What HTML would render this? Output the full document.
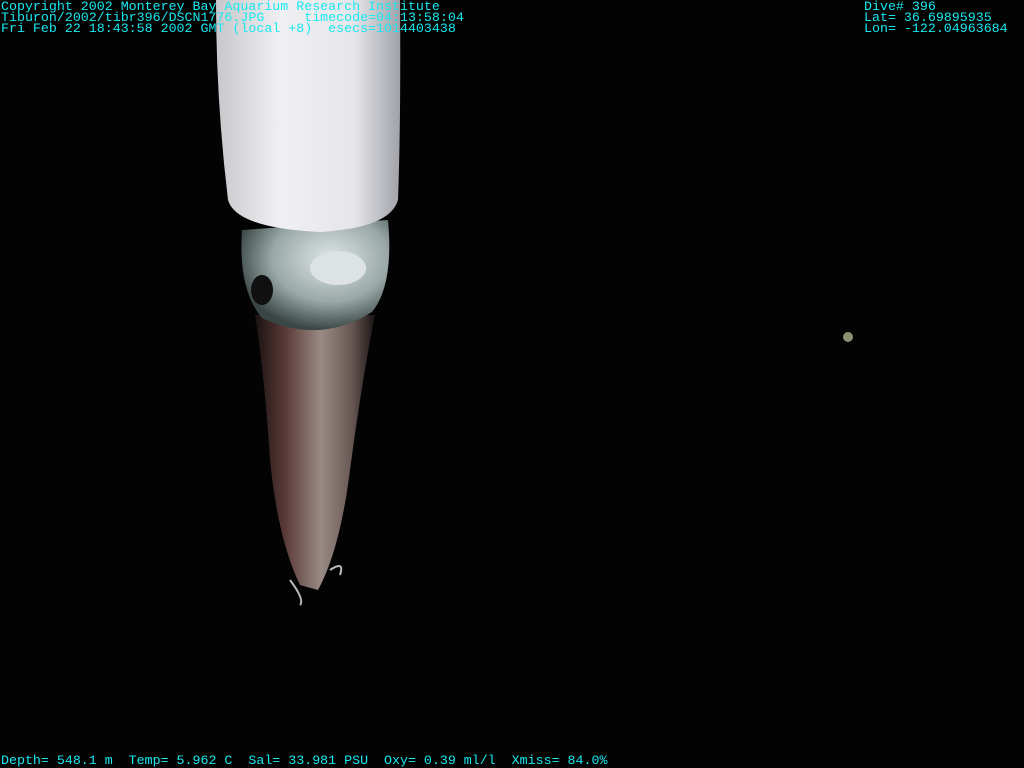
<!DOCTYPE html>
<html><head><style>
body{margin:0;background:#030303;width:1024px;height:768px;overflow:hidden;position:relative}
.t{position:absolute;font-family:"Liberation Mono",monospace;font-size:13.3px;line-height:11px;color:#18e8f0;white-space:pre;letter-spacing:0}
</style></head><body>
<svg width="1024" height="768" style="position:absolute;left:0;top:0">
<defs>
<linearGradient id="b" x1="0" x2="1"><stop offset="0" stop-color="#c8c8cc"/><stop offset=".35" stop-color="#f0f0f2"/><stop offset=".75" stop-color="#e6e6ea"/><stop offset="1" stop-color="#a0a2a8"/></linearGradient>
<linearGradient id="a" x1="0" x2="1"><stop offset="0" stop-color="#1a1212"/><stop offset=".25" stop-color="#5a3a38"/><stop offset=".55" stop-color="#9a8a84"/><stop offset=".8" stop-color="#6a5a56"/><stop offset="1" stop-color="#1a1414"/></linearGradient>
<radialGradient id="h" cx=".6" cy=".35" r=".65"><stop offset="0" stop-color="#dfe6e6"/><stop offset=".6" stop-color="#9aa8a8"/><stop offset="1" stop-color="#3a4646"/></radialGradient>
</defs>
<path d="M255 315 Q265 380 270 460 Q278 540 300 585 L318 590 Q340 550 350 470 Q362 380 375 315 Z" fill="url(#a)"/>
<path d="M242 230 Q238 290 262 318 Q320 345 372 312 Q394 285 388 220 Z" fill="url(#h)"/>
<path d="M216 0 L400 0 Q401 120 398 200 Q390 228 320 232 Q236 228 228 200 Q216 100 216 0Z" fill="url(#b)"/>
<ellipse cx="338" cy="268" rx="28" ry="17" fill="#dde2e2"/>
<ellipse cx="262" cy="290" rx="11" ry="15" fill="#101010"/>
<path d="M290 580 Q305 600 300 605 M330 570 Q345 560 340 575" stroke="#bbb" stroke-width="2" fill="none"/>
<circle cx="848" cy="337" r="5" fill="#8a9070"/>
</svg>
<div class="t" style="left:1px;top:1px">Copyright 2002 Monterey Bay Aquarium Research Institute
Tiburon/2002/tibr396/DSCN1776.JPG     timecode=04:13:58:04
Fri Feb 22 18:43:58 2002 GMT (local +8)  esecs=1014403438</div>
<div class="t" style="left:864px;top:1px">Dive# 396
Lat= 36.69895935
Lon= -122.04963684</div>
<div class="t" style="left:1px;top:755px">Depth= 548.1 m  Temp= 5.962 C  Sal= 33.981 PSU  Oxy= 0.39 ml/l  Xmiss= 84.0%</div>
</body></html>
